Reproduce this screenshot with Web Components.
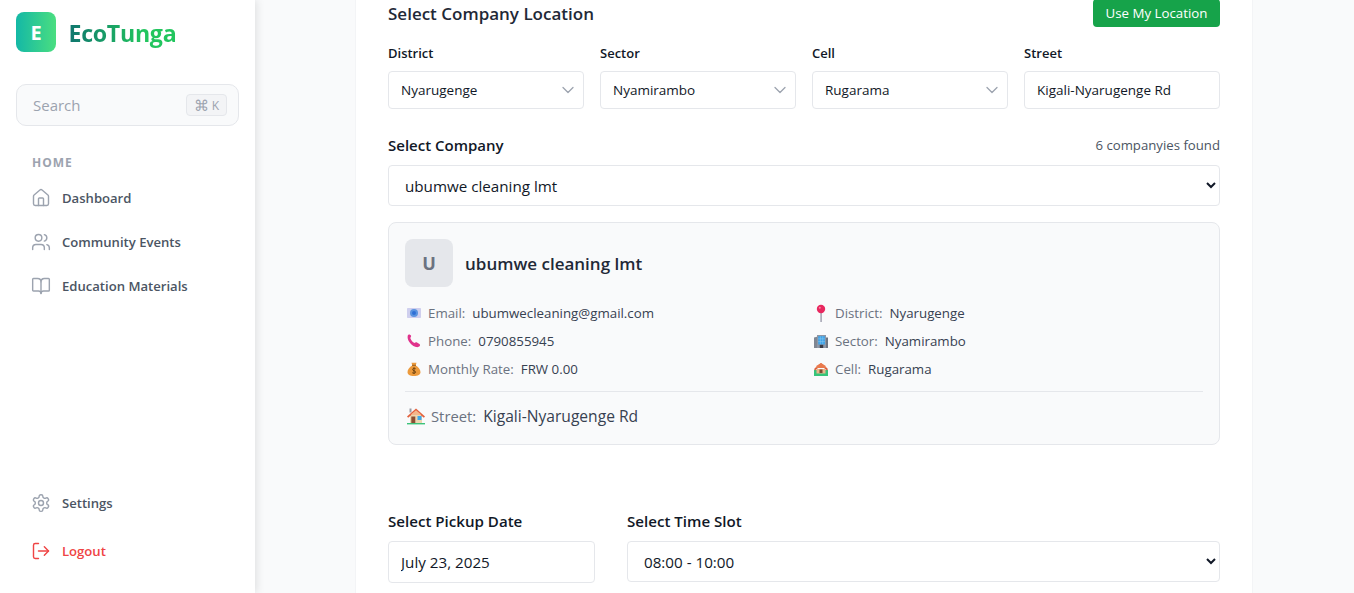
<!DOCTYPE html>
<html><head><meta charset="utf-8"><title>EcoTunga</title>
<style>
html,body{margin:0;height:100%;overflow:hidden;background:#f9fafb;font-family:"Open Sans","Noto Sans",sans-serif}
</style></head><body>
<template id="t-app"><style>
:host{display:flex;height:593px;overflow:hidden}
main{flex:1;min-width:0;padding:0 101px 0 100px;overflow:hidden}
</style><slot name="side"></slot><main><slot></slot></main></template>

<template id="t-side"><style>
:host{display:flex;flex-direction:column;width:255px;flex:none;height:593px;box-sizing:border-box;background:#fff;box-shadow:2px 0 8px rgba(0,0,0,.1);position:relative;z-index:1;padding:12px 16px 18px}
.logo{display:flex;align-items:center;gap:12.500px;height:40px}
.mark{width:40px;height:40px;border-radius:8px;background:linear-gradient(90deg,#14b8a6,#4ade80);color:#fff;font:700 20px "Open Sans",sans-serif;display:flex;align-items:center;justify-content:center}
.name{font:700 23.200px "Open Sans",sans-serif;letter-spacing:-.3px;padding-top:2px;background:linear-gradient(90deg,#0f766e,#22c55e 70%);-webkit-background-clip:text;background-clip:text;color:transparent}
.search{margin-top:32px;height:42px;box-sizing:border-box;border:1px solid #e5e7eb;border-radius:10px;background:#f9fafb;display:flex;align-items:center;justify-content:space-between;padding:0 11px 0 16px;color:#9ca3af;font-size:15px}
kbd{font:12px "Open Sans",sans-serif;border:1px solid #e5e7eb;background:#f3f4f6;border-radius:4px;height:22px;width:41px;box-sizing:border-box;display:flex;align-items:center;justify-content:center;gap:3px;color:#9ca3af}
kbd b{font-weight:400;font-size:15px}
h4{margin:29px 0 5px 16px;font:700 12px/16px "Open Sans",sans-serif;letter-spacing:1px;color:#9ca3af}
.grow{flex:1}
</style>
<div class="logo"><div class="mark">E</div><div class="name">EcoTunga</div></div>
<div class="search"><span>Search</span><kbd><b>⌘</b>K</kbd></div>
<h4>HOME</h4>
<slot name="top"></slot><div class="grow"></div><slot name="bottom"></slot></template>

<template id="t-nav"><style>
:host{display:flex;align-items:center;gap:11px;height:44px;padding-left:15px;font:600 13.100px "Open Sans",sans-serif;color:#4b5563}
:host([danger]){color:#ef4444;height:48px}
:host([tall]){height:48px}
::slotted(svg){width:20px;height:20px;flex:none;fill:none;stroke:#9ca3af;stroke-width:1.7;stroke-linecap:round;stroke-linejoin:round}
:host([danger]) ::slotted(svg){stroke:#ef4444}
</style><slot name="i"></slot><slot></slot></template>

<template id="t-card"><style>
:host{display:block;background:#fff;border:1px solid #f3f4f6;border-width:0 1px;padding:0 32px;height:700px;margin-top:-1px}
.head{display:flex;justify-content:space-between;align-items:center;height:28px;color:#1f2937;font-weight:600;font-size:17px}
button{background:#16a34a;color:#fff;border:0;border-radius:4px;height:28px;width:127px;font:500 13.300px "Open Sans",sans-serif;padding:0}
.grid4{display:grid;grid-template-columns:repeat(4,1fr);gap:16px;margin-top:16px}
.co{display:flex;justify-content:space-between;align-items:center;margin-top:26px;height:20px}
.co b{font-weight:600;font-size:15px;color:#111827}
.co span{font-size:13.200px;color:#4b5563}
select.big,input.big{display:block;width:100%;box-sizing:border-box;height:41px;border:1px solid #e5e7eb;border-radius:4px;background:#fff;font:15.200px "Open Sans",sans-serif;color:#111827;padding:0 12px}
.gap{margin-top:10px}
.bottom{display:grid;grid-template-columns:207px 1fr;gap:32px;margin-top:66px}
.bottom label{display:block;font-weight:600;font-size:15.100px;color:#111827;line-height:20px;margin-bottom:10px}
input.big{height:42px;padding:0 12px}
</style>
<div class="head"><span>Select Company Location</span><button>Use My Location</button></div>
<div class="grid4">
<eco-field label="District" value="Nyarugenge"></eco-field>
<eco-field label="Sector" value="Nyamirambo"></eco-field>
<eco-field label="Cell" value="Rugarama"></eco-field>
<eco-field label="Street" value="Kigali-Nyarugenge Rd" plain></eco-field>
</div>
<div class="co"><b>Select Company</b><span>6 companyies found</span></div>
<select class="big gap"><option>ubumwe cleaning lmt</option></select>
<eco-company></eco-company>
<div class="bottom">
<div><label>Select Pickup Date</label><input class="big" value="July 23, 2025"></div>
<div><label>Select Time Slot</label><select class="big"><option>08:00 - 10:00</option></select></div>
</div></template>

<template id="t-field"><style>
:host{display:block;font-family:"Open Sans",sans-serif}
label{display:block;font-weight:600;font-size:13px;line-height:20px;color:#111827;margin-bottom:8px}
.wrap{position:relative;display:block}
select,input{appearance:none;width:100%;box-sizing:border-box;height:38px;border:1px solid #e5e7eb;border-radius:4px;background:#fff;padding:0 12px;font:13.500px "Open Sans",sans-serif;color:#111827;display:block}
svg{position:absolute;right:10px;top:15px;width:12px;height:8px;fill:none;stroke:#9ca3af;stroke-width:1.3;stroke-linecap:round;stroke-linejoin:round;pointer-events:none}
</style><label></label><span class="wrap"></span></template>

<template id="t-company"><style>
:host{display:block;margin-top:16px;box-sizing:border-box;height:223px;border:1px solid #e5e7eb;border-radius:8px;background:#f9fafb;padding:16px}
.top{display:flex;align-items:center;gap:12px}
.av{width:48px;height:48px;border-radius:8px;background:#e5e7eb;color:#6b7280;font-weight:700;font-size:18px;display:flex;align-items:center;justify-content:center}
.nm{font-weight:600;font-size:17px;color:#1f2937}
.rows{display:grid;grid-template-columns:1fr 1fr;gap:8px 16px;margin-top:16px}
.rule{height:1px;background:#e5e7eb;margin-top:12px}
.st{margin-top:14px;line-height:22px}
</style>
<div class="top"><div class="av">U</div><div class="nm">ubumwe cleaning lmt</div></div>
<div class="rows">
<eco-info icon="mail" k="Email:" v="ubumwecleaning@gmail.com"></eco-info>
<eco-info icon="pin" k="District:" v="Nyarugenge"></eco-info>
<eco-info icon="phone" k="Phone:" v="0790855945"></eco-info>
<eco-info icon="office" k="Sector:" v="Nyamirambo"></eco-info>
<eco-info icon="bag" k="Monthly Rate:" v="FRW 0.00"></eco-info>
<eco-info icon="garden" k="Cell:" v="Rugarama"></eco-info>
</div>
<div class="rule"></div>
<div class="st"><eco-info large icon="house" k="Street:" v="Kigali-Nyarugenge Rd"></eco-info></div></template>

<template id="t-info"><style>
:host{display:flex;align-items:center;line-height:20px;white-space:nowrap;font-family:"Open Sans",sans-serif;font-size:13.300px;color:#6b7280}
:host([large]){font-size:14.800px}
:host([large]) .v{font-size:15.600px}
.slot-i{display:contents}
svg{width:14px;height:14px;margin:0 7px 0 2px;flex:none;display:block}
:host([large]) svg{width:18px;height:18px;margin-right:6px}
.v{color:#374151;margin-left:7px}
</style><span class="slot-i"></span><span class="k"></span><span class="v"></span></template>

<eco-app>
<eco-side slot="side">
<eco-nav slot="top"><svg slot="i" viewBox="0 0 24 24"><path d="M3 10a2 2 0 0 1 .709-1.528l7-5.999a2 2 0 0 1 2.582 0l7 5.999A2 2 0 0 1 21 10v9a2 2 0 0 1-2 2H5a2 2 0 0 1-2-2z"/><path d="M15 21v-8a1 1 0 0 0-1-1h-4a1 1 0 0 0-1 1v8"/></svg>Dashboard</eco-nav>
<eco-nav slot="top"><svg slot="i" viewBox="0 0 24 24"><path d="M16 21v-2a4 4 0 0 0-4-4H6a4 4 0 0 0-4 4v2"/><circle cx="9" cy="7" r="4"/><path d="M22 21v-2a4 4 0 0 0-3-3.870"/><path d="M16 3.130a4 4 0 0 1 0 7.750"/></svg>Community Events</eco-nav>
<eco-nav slot="top"><svg slot="i" viewBox="0 0 24 24"><path d="M12 7v14"/><path d="M3 18a1 1 0 0 1-1-1V4a1 1 0 0 1 1-1h5a4 4 0 0 1 4 4 4 4 0 0 1 4-4h5a1 1 0 0 1 1 1v13a1 1 0 0 1-1 1h-6a3 3 0 0 0-3 3 3 3 0 0 0-3-3z"/></svg>Education Materials</eco-nav>
<eco-nav slot="bottom" tall><svg slot="i" viewBox="0 0 24 24"><path d="M12.220 2h-.44a2 2 0 0 0-2 2v.18a2 2 0 0 1-1 1.730l-.43.25a2 2 0 0 1-2 0l-.15-.08a2 2 0 0 0-2.730.73l-.22.38a2 2 0 0 0 .73 2.730l.15.1a2 2 0 0 1 1 1.720v.51a2 2 0 0 1-1 1.740l-.15.09a2 2 0 0 0-.73 2.730l.22.38a2 2 0 0 0 2.730.73l.15-.08a2 2 0 0 1 2 0l.43.25a2 2 0 0 1 1 1.730V20a2 2 0 0 0 2 2h.44a2 2 0 0 0 2-2v-.18a2 2 0 0 1 1-1.730l.43-.25a2 2 0 0 1 2 0l.15.08a2 2 0 0 0 2.730-.73l.22-.39a2 2 0 0 0-.73-2.730l-.15-.08a2 2 0 0 1-1-1.740v-.5a2 2 0 0 1 1-1.740l.15-.09a2 2 0 0 0 .73-2.730l-.22-.38a2 2 0 0 0-2.730-.73l-.15.08a2 2 0 0 1-2 0l-.43-.25a2 2 0 0 1-1-1.730V4a2 2 0 0 0-2-2z"/><circle cx="12" cy="12" r="3"/></svg>Settings</eco-nav>
<eco-nav slot="bottom" danger><svg slot="i" viewBox="0 0 24 24"><path d="M9 21H5a2 2 0 0 1-2-2V5a2 2 0 0 1 2-2h4"/><path d="m16 17 5-5-5-5"/><path d="M21 12H9"/></svg>Logout</eco-nav>
</eco-side>
<eco-card></eco-card>
</eco-app>

<script>
const ICONS={
mail:'<svg viewBox="0 0 14 14"><rect y="2" width="14" height="10" rx=".8" fill="#cfcfee"/><circle cx="7" cy="7" r="4" fill="#5b94e0"/><circle cx="7" cy="7" r="2" fill="#2f6fd6"/></svg>',
phone:'<svg viewBox="0 0 14 14"><path d="M.7 1.800C1 .8 2.200.3 3 .7l1 .9c.3.5 0 1.500-.5 2-.4.5.1 1.500.9 2.700.9 1.300 2 2.500 3 2.600.7-.3 1.500-.9 2.200-.6l2.800 1.700c.8.5.8 1.300.3 2-.7 1-2.200 1.400-3.700 1C5.500 12.300 1.800 8.500.8 4.800.6 3.800.5 2.700.7 1.800z" fill="#e0338c"/></svg>',
bag:'<svg viewBox="0 0 14 14"><path d="M4.500.8 9.500.8 8.700 3.400C11.500 5 13.500 7.500 13.500 10.200 13.500 12.600 11 14 7 14S.5 12.600.5 10.200C.5 7.500 2.500 5 5.300 3.400z" fill="#ec9a3c"/><path d="M5 3.300h4" stroke="#8f5a1d" stroke-width=".9"/><path d="M8.700 6.800C8 6 5.600 6 5.600 7.500c0 1.600 3 1 3 2.600 0 1.400-2.500 1.400-3.400.6M7 5.300v6.700" fill="none" stroke="#6f4310" stroke-width="1"/></svg>',
pin:'<svg viewBox="0 0 14 14" style="overflow:visible"><rect x="6.300" y="7" width="1.600" height="9" fill="#a7a7b5"/><circle cx="7" cy="3" r="4.200" fill="#e8285f"/><circle cx="5.800" cy="1.700" r="1" fill="#f78ba6"/></svg>',
office:'<svg viewBox="0 0 14 14"><path d="M0 3.500 3 2.800V14H0z" fill="#7f8692"/><rect x="3" y="1" width="9" height="13" fill="#8e97a6"/><rect x="12" y="3.500" width="2" height="10.500" fill="#6e7581"/><path d="M4.200 2.200h6.700v8.300H4.200z" fill="#3fa4ea"/><path d="M4.200 4.800h6.700M4.200 7.500h6.700M6.400 2.200v8.300M8.700 2.200v8.300" stroke="#8cc8ef" stroke-width=".5"/><rect x="5.800" y="10.800" width="3.400" height="3.200" fill="#3b3b45"/></svg>',
garden:'<svg viewBox="0 0 14 14"><rect y="8" width="14" height="6" fill="#35c47a"/><path d="M2.500 7h9v4.500h-9z" fill="#e8b58b"/><path d="M7 1 0 7l1 1.500L7 3.500l6 5 1-1.500z" fill="#d9603e"/><path d="M3 3.500 7 1l4 2.500 1.500 2.500H1.500z" fill="#ea7a4d"/><rect x="5.500" y="7.500" width="3" height="3.500" fill="#7a4a32"/></svg>',
house:'<svg viewBox="0 0 18 18"><rect x="2.500" y="1.500" width="2" height="4" fill="#9a9aa5"/><path d="M3 8h12v8H3z" fill="#ecd6b0"/><path d="M9 1.500 0 9.500l1.200 1.200L9 4l7.800 6.700L18 9.500z" fill="#e2603c"/><path d="M4 7.500 9 3.300l5 4.200-1 .5H5z" fill="#f3b78c"/><rect x="4.300" y="9.500" width="4" height="6.500" fill="#8b4f33"/><rect x="10.500" y="9" width="4" height="4" fill="#3ea7e8"/><rect y="16" width="18" height="1.400" fill="#3cc37a"/></svg>'
};
function mk(name,id,init){customElements.define(name,class extends HTMLElement{
 constructor(){super();this.attachShadow({mode:"open"}).appendChild(document.getElementById(id).content.cloneNode(true));}
 connectedCallback(){if(init)init.call(this,this.shadowRoot)}
})}
mk("eco-app","t-app");mk("eco-side","t-side");mk("eco-nav","t-nav");mk("eco-card","t-card");mk("eco-company","t-company");
mk("eco-field","t-field",function(r){
 r.querySelector("label").textContent=this.getAttribute("label");
 const w=r.querySelector(".wrap"),v=this.getAttribute("value");
 if(this.hasAttribute("plain")){const i=document.createElement("input");i.value=v;w.appendChild(i)}
 else{const s=document.createElement("select"),o=document.createElement("option");o.textContent=v;s.appendChild(o);w.appendChild(s);
 w.insertAdjacentHTML("beforeend",'<svg viewBox="0 0 12 8"><path d="M1 1.500 6 6.500l5-5"/></svg>')}
});
mk("eco-info","t-info",function(r){
 r.querySelector(".slot-i").innerHTML=ICONS[this.getAttribute("icon")];
 r.querySelector(".k").textContent=this.getAttribute("k");
 r.querySelector(".v").textContent=this.getAttribute("v");
});
</script>
</body></html>
